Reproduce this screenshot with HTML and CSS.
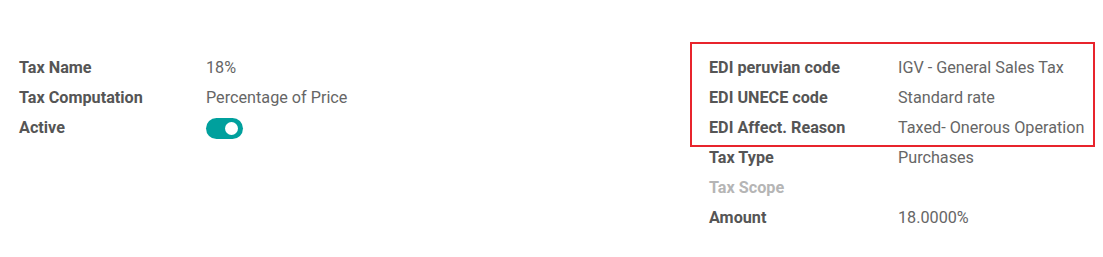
FILE: index.html
```html
<!DOCTYPE html>
<html>
<head>
<meta charset="utf-8">
<link rel="stylesheet" href="styles.css">
</head>
<body>
<div class="sheet">
  <div class="group left">
    <div class="row"><span class="label">Tax Name</span><span class="value">18%</span></div>
    <div class="row"><span class="label">Tax Computation</span><span class="value">Percentage of Price</span></div>
    <div class="row"><span class="label">Active</span><span class="value"><span class="toggle"><span class="knob"></span></span></span></div>
  </div>
  <div class="group right">
    <div class="row"><span class="label">EDI peruvian code</span><span class="value">IGV - General Sales Tax</span></div>
    <div class="row"><span class="label">EDI UNECE code</span><span class="value">Standard rate</span></div>
    <div class="row"><span class="label">EDI Affect. Reason</span><span class="value">Taxed- Onerous Operation</span></div>
    <div class="row"><span class="label">Tax Type</span><span class="value">Purchases</span></div>
    <div class="row"><span class="label muted">Tax Scope</span><span class="value"></span></div>
    <div class="row"><span class="label">Amount</span><span class="value">18.0000%</span></div>
    <div class="highlight"></div>
  </div>
</div>
</body>
</html>
```
FILE: styles.css
```css
html, body {
  margin: 0;
  padding: 0;
  background: #ffffff;
}
body {
  font-family: Roboto, "Noto Sans", sans-serif;
  font-size: 16.2px;
  color: #555555;
}
.sheet {
  display: flex;
  padding: 52px 0 0 19px;
}
.group {
  display: flex;
  flex-direction: column;
}
.left {
  width: 690px;
}
.right {
  position: relative;
  width: 385px;
}
.row {
  display: flex;
  align-items: center;
  height: 30px;
}
.label {
  font-weight: 700;
  color: #555555;
  width: 187px;
  flex: none;
}
.right .label {
  width: 189px;
}
.label.muted {
  color: #b5b5b5;
}
.value {
  color: #666666;
}
.toggle {
  display: flex;
  align-items: center;
  justify-content: flex-end;
  width: 37px;
  height: 21px;
  border-radius: 11px;
  background: #00a09d;
  padding: 0 5px;
  box-sizing: border-box;
  margin-top: 2px;
}
.knob {
  width: 13px;
  height: 13px;
  border-radius: 50%;
  background: #ffffff;
}
.highlight {
  position: absolute;
  left: -19px;
  top: -10px;
  width: 401px;
  height: 101px;
  border: 2px solid #e8242c;
}
```
